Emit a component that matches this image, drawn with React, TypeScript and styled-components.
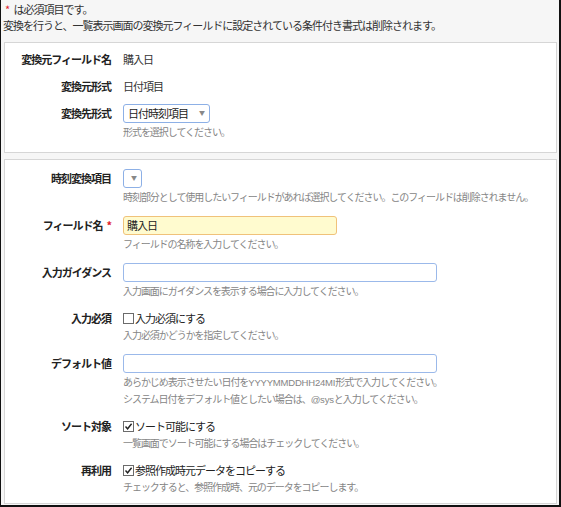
import React from "react";
import styled, { createGlobalStyle } from "styled-components";

const GlobalStyle = createGlobalStyle`
    html, body {
        margin: 0;
        padding: 0;
        background: #ffffff;
    }
    * {
        box-sizing: border-box;
    }
`;

const FONT = `"MS UI Gothic", "Noto Sans CJK JP", "Liberation Sans", sans-serif`;

function CheckBox({ checked }: { checked?: boolean }) {
    return (
        <Box>
            {checked && (
                <svg width="9" height="9" viewBox="0 0 9 9">
                    <path d="M1.5 4.5 L3.6 6.8 L7.6 1.8" fill="none" stroke="#222" strokeWidth="1.4" />
                </svg>
            )}
        </Box>
    );
}

function Select({ value, width }: { value?: string; width: number }) {
    return (
        <SelectBox $width={width}>
            <SelectText>{value}</SelectText>
            <Arrow>▼</Arrow>
        </SelectBox>
    );
}

export default function App() {
    return (
        <Page>
            <GlobalStyle />
            <Notice>
                <Star>*</Star> は必須項目です。
            </Notice>
            <Notice>変換を行うと、一覧表示画面の変換元フィールドに設定されている条件付き書式は削除されます。</Notice>

            <Panel $gap={8} $top={7} $bottom={12}>
                <Row>
                    <Label>変換元フィールド名</Label>
                    <Value>
                        <Text>購入日</Text>
                    </Value>
                </Row>
                <Row>
                    <Label>変換元形式</Label>
                    <Value>
                        <Text>日付項目</Text>
                    </Value>
                </Row>
                <Row>
                    <Label>変換先形式</Label>
                    <Value>
                        <Select value="日付時刻項目" width={87} />
                        <Help>形式を選択してください。</Help>
                    </Value>
                </Row>
            </Panel>

            <Panel $gap={11} $top={9} $bottom={8} $grow>
                <Row>
                    <Label>時刻変換項目</Label>
                    <Value>
                        <Select width={19} />
                        <Help>時刻部分として使用したいフィールドがあれば選択してください。このフィールドは削除されません。</Help>
                    </Value>
                </Row>
                <Row>
                    <Label>
                        フィールド名<Star $gap>*</Star>
                    </Label>
                    <Value>
                        <Input $width={214} $required>購入日</Input>
                        <Help>フィールドの名称を入力してください。</Help>
                    </Value>
                </Row>
                <Row>
                    <Label>入力ガイダンス</Label>
                    <Value>
                        <Input $width={314} />
                        <Help>入力画面にガイダンスを表示する場合に入力してください。</Help>
                    </Value>
                </Row>
                <Row>
                    <Label $small>入力必須</Label>
                    <Value>
                        <Check>
                            <CheckBox />
                            入力必須にする
                        </Check>
                        <Help>入力必須かどうかを指定してください。</Help>
                    </Value>
                </Row>
                <Row>
                    <Label>デフォルト値</Label>
                    <Value>
                        <Input $width={314} />
                        <Help>
                            あらかじめ表示させたい日付を<Latin>YYYYMMDDHH24MI</Latin>形式で入力してください。
                        </Help>
                        <Help>
                            システム日付をデフォルト値としたい場合は、<Latin>@sys</Latin>と入力してください。
                        </Help>
                    </Value>
                </Row>
                <Row>
                    <Label $small>ソート対象</Label>
                    <Value>
                        <Check>
                            <CheckBox checked />
                            ソート可能にする
                        </Check>
                        <Help>一覧画面でソート可能にする場合はチェックしてください。</Help>
                    </Value>
                </Row>
                <Row>
                    <Label $small>再利用</Label>
                    <Value>
                        <Check>
                            <CheckBox checked />
                            参照作成時元データをコピーする
                        </Check>
                        <Help>チェックすると、参照作成時、元のデータをコピーします。</Help>
                    </Value>
                </Row>
            </Panel>
        </Page>
    );
}

const Page = styled.div`
    width: 561px;
    height: 507px;
    display: flex;
    flex-direction: column;
    padding-top: 1px;
    background: #f6f6f6;
    border-left: 1px solid #111;
    border-right: 2px solid #111;
    border-bottom: 2px solid #111;
    font-family: ${FONT};
    font-size: 11px;
    letter-spacing: -1px;
    color: #333;
`;

const Notice = styled.div`
    height: 16px;
    line-height: 16px;
    padding-left: 2px;
    white-space: nowrap;
`;

const Star = styled.span<{ $gap?: boolean }>`
    color: #e0202a;
    margin: ${(p) => (p.$gap ? "0 0 0 4px" : "0 3px 0 2px")};
`;

const Panel = styled.div<{ $gap: number; $top: number; $bottom: number; $grow?: boolean }>`
    margin: ${(p) => (p.$grow ? "6px 2px 1px 3px" : "9px 2px 0 3px")};
    flex: ${(p) => (p.$grow ? 1 : "none")};
    background: #fff;
    border: 1px solid #d6d6d6;
    padding: ${(p) => `${p.$top}px 0 ${p.$bottom}px 0`};
    display: flex;
    flex-direction: column;
    gap: ${(p) => p.$gap}px;
`;

const Row = styled.div`
    display: grid;
    grid-template-columns: 106px 1fr;
    column-gap: 12px;
    align-items: start;
`;

const Label = styled.div<{ $small?: boolean }>`
    text-align: right;
    font-weight: bold;
    height: ${(p) => (p.$small ? 16 : 19)}px;
    line-height: ${(p) => (p.$small ? 16 : 19)}px;
    white-space: nowrap;
    color: #222;
`;

const Value = styled.div`
    display: flex;
    flex-direction: column;
    align-items: flex-start;
`;

const Text = styled.div`
    height: 19px;
    line-height: 19px;
`;

const Help = styled.div`
    font-size: 10px;
    letter-spacing: -1.05px;
    line-height: 17px;
    height: 17px;
    color: #858585;
    white-space: nowrap;
`;

const Latin = styled.span`
    letter-spacing: -0.2px;
    font-size: 9.5px;
    font-family: "Liberation Sans", sans-serif;
`;

const SelectBox = styled.div<{ $width: number }>`
    width: ${(p) => p.$width}px;
    height: 19px;
    border: 1px solid #8db0e6;
    border-radius: 3px;
    background: #fff;
    display: flex;
    align-items: center;
    justify-content: space-between;
    padding: 0 4px 0 4px;
`;

const SelectText = styled.span`
    line-height: 17px;
    color: #222;
`;

const Arrow = styled.span`
    font-size: 6px;
    letter-spacing: 0;
    color: #888;
    line-height: 17px;
    margin-top: -2px;
`;

const Input = styled.div<{ $width: number; $required?: boolean }>`
    width: ${(p) => p.$width}px;
    height: 19px;
    line-height: 17px;
    padding: 0 3px;
    border: 1px solid ${(p) => (p.$required ? "#f0c27a" : "#9bb9ea")};
    border-radius: 3px;
    background: ${(p) => (p.$required ? "#fffbcf" : "#fff")};
    color: #222;
`;

const Check = styled.label`
    display: flex;
    align-items: center;
    height: 16px;
    line-height: 16px;
    color: #222;
`;

const Box = styled.span`
    width: 11px;
    height: 11px;
    border: 1px solid #6b6b6b;
    background: #fff;
    margin-right: 1px;
    display: inline-flex;
    align-items: center;
    justify-content: center;
`;
